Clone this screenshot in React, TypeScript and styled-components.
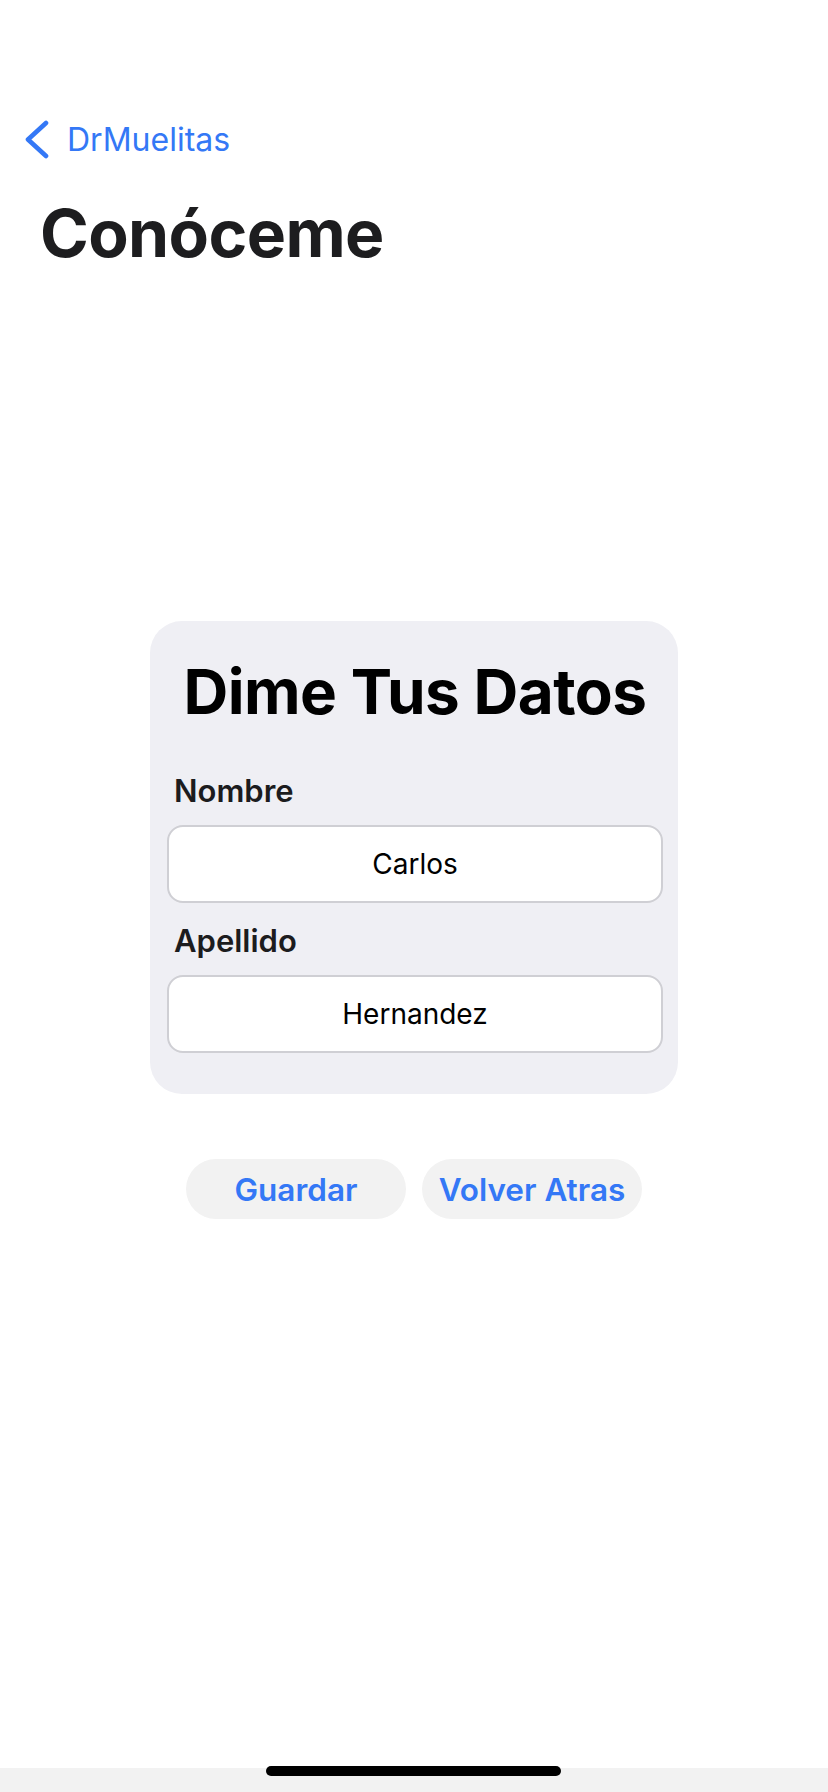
import React from "react";
import styled, { createGlobalStyle } from "styled-components";

const GlobalStyle = createGlobalStyle`
  html, body {
    margin: 0;
    padding: 0;
    background: #ffffff;
  }
  body {
    font-family: Inter, "Noto Sans", "Liberation Sans", sans-serif;
    -webkit-font-smoothing: antialiased;
  }
  * { box-sizing: border-box; }
`;

const Screen = styled.div`
  position: relative;
  width: 828px;
  height: 1792px;
  display: flex;
  flex-direction: column;
  background: #ffffff;
  overflow: hidden;
`;

const NavBar = styled.header`
  display: flex;
  flex-direction: column;
  padding-top: 120px;
`;

const BackButton = styled.button`
  display: flex;
  align-items: center;
  gap: 17px;
  align-self: flex-start;
  margin-left: 24px;
  padding: 0;
  border: none;
  background: transparent;
  color: #3478f6;
  font-family: Inter, "Liberation Sans", sans-serif;
  font-size: 32px;
  line-height: 40px;
  font-weight: 400;
  cursor: pointer;
`;

const LargeTitle = styled.h1`
  margin: 33px 0 0 40px;
  font-family: Inter, "Liberation Sans", sans-serif;
  font-size: 66px;
  line-height: 80px;
  font-weight: 700;
  letter-spacing: -0.6px;
  color: #1d1d1f;
`;

const Main = styled.main`
  flex: 1;
  display: flex;
  flex-direction: column;
  align-items: center;
  padding-top: 348px;
`;

const Card = styled.section`
  width: 528px;
  display: flex;
  flex-direction: column;
  padding: 34px 15px 41px 17px;
  border-radius: 32px;
  background: #efeff4;
`;

const CardTitle = styled.h2`
  margin: 0;
  text-align: center;
  font-family: Inter, "Liberation Sans", sans-serif;
  font-size: 62px;
  line-height: 74px;
  font-weight: 700;
  letter-spacing: -0.5px;
  color: #000000;
`;

const Label = styled.label<{ $gap: number }>`
  display: block;
  margin-top: ${(p) => p.$gap}px;
  padding-left: 7px;
  font-family: Inter, "Liberation Sans", sans-serif;
  font-size: 31px;
  line-height: 38px;
  font-weight: 600;
  color: #1c1c1e;
`;

const Field = styled.input`
  display: block;
  width: 100%;
  height: 78px;
  margin-top: 15px;
  padding: 0 16px;
  border: 2px solid #cfcfd4;
  border-radius: 16px;
  background: #ffffff;
  text-align: center;
  font-family: Inter, "Liberation Sans", sans-serif;
  font-size: 28px;
  font-weight: 400;
  color: #000000;
  outline: none;
`;

const ButtonRow = styled.div`
  display: flex;
  gap: 16px;
  margin-top: 65px;
`;

const PillButton = styled.button`
  width: 220px;
  height: 60px;
  border: none;
  border-radius: 30px;
  background: #f2f2f2;
  color: #3478f6;
  font-family: Inter, "Liberation Sans", sans-serif;
  font-size: 31.5px;
  font-weight: 600;
  padding: 0;
  cursor: pointer;
`;

const BottomBand = styled.footer`
  height: 24px;
  background: #f2f2f2;
`;

const HomeIndicator = styled.div`
  position: absolute;
  left: 266px;
  bottom: 16px;
  width: 295px;
  height: 10px;
  border-radius: 5px;
  background: #000000;
`;

const Chevron = () => (
  <svg width="26" height="40" viewBox="0 0 26 40" fill="none">
    <path
      d="M22 3 L4 19.5 L22 36"
      stroke="#3478f6"
      strokeWidth="4.6"
      strokeLinecap="round"
      strokeLinejoin="round"
    />
  </svg>
);

export default function App() {
  return (
    <>
      <GlobalStyle />
      <Screen>
        <NavBar>
          <BackButton type="button">
            <Chevron />
            <span>DrMuelitas</span>
          </BackButton>
          <LargeTitle>Conóceme</LargeTitle>
        </NavBar>
        <Main>
          <Card>
            <CardTitle>Dime Tus Datos</CardTitle>
            <Label $gap={43} htmlFor="nombre">Nombre</Label>
            <Field id="nombre" defaultValue="Carlos" />
            <Label $gap={19} htmlFor="apellido">Apellido</Label>
            <Field id="apellido" defaultValue="Hernandez" />
          </Card>
          <ButtonRow>
            <PillButton type="button">Guardar</PillButton>
            <PillButton type="button">Volver Atras</PillButton>
          </ButtonRow>
        </Main>
        <BottomBand />
        <HomeIndicator />
      </Screen>
    </>
  );
}
